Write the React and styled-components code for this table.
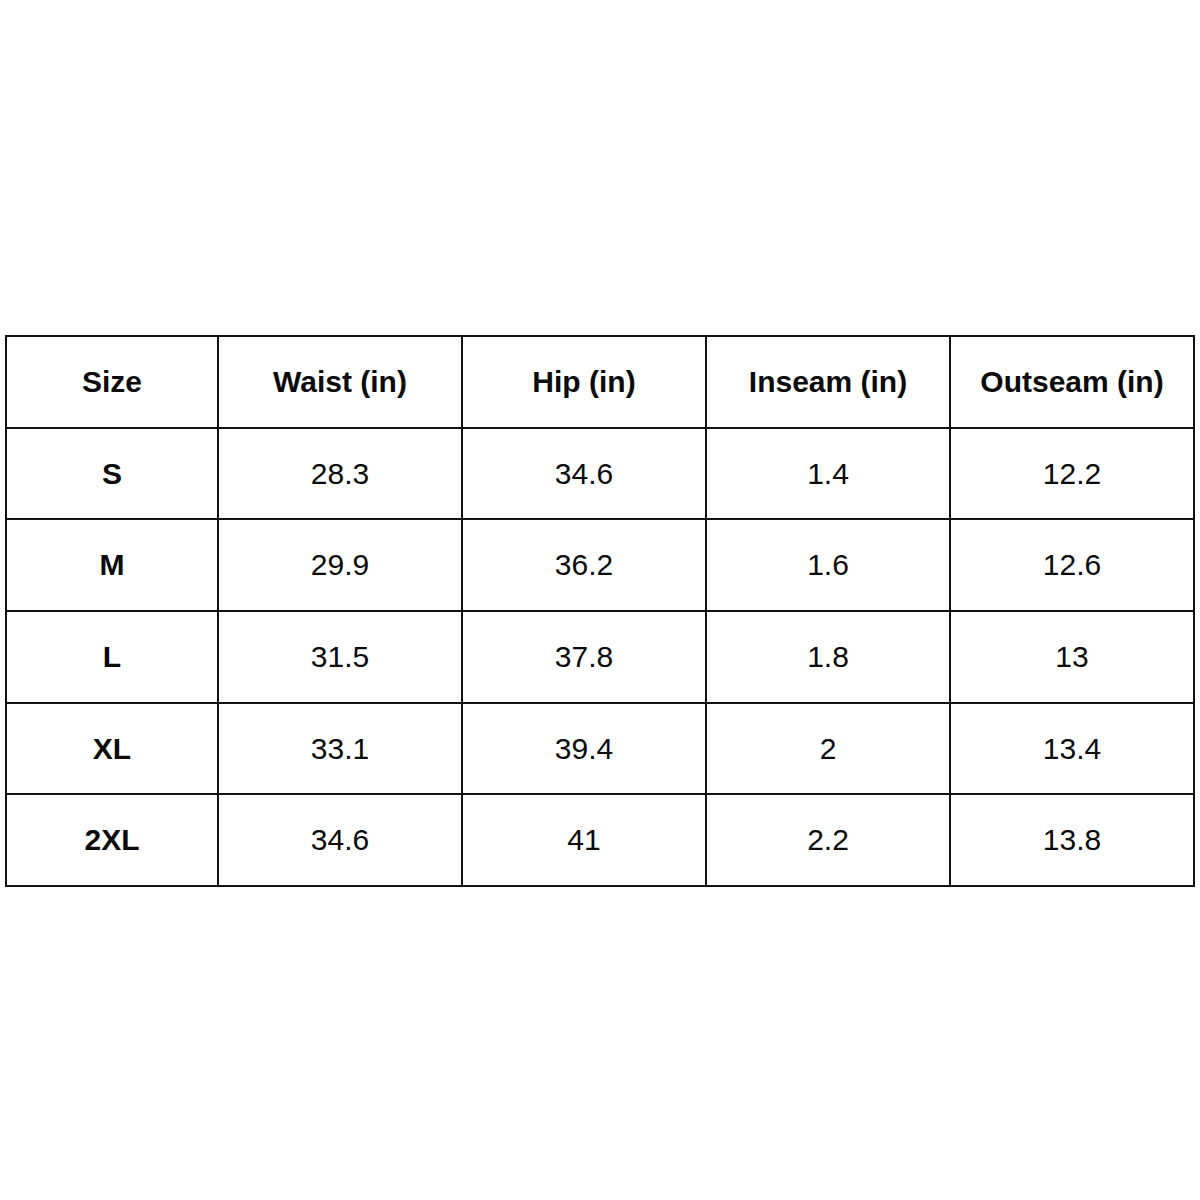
import React from "react";
import styled, { createGlobalStyle } from "styled-components";

const GlobalStyle = createGlobalStyle`
  html, body {
    margin: 0;
    padding: 0;
    background: #ffffff;
  }
  body {
    font-family: "Liberation Sans", Arial, sans-serif;
    color: #0a0a0a;
  }
`;

const Page = styled.div`
  width: 1200px;
  height: 1200px;
  box-sizing: border-box;
  padding: 335px 5px 0 5px;
`;

const Grid = styled.div`
  display: grid;
  grid-template-columns: 210px repeat(4, 242px);
  grid-auto-rows: 89.7px;
  gap: 2px;
  padding: 2px;
  background: #111111;
  width: max-content;
`;

const Cell = styled.div`
  background: #ffffff;
  display: flex;
  align-items: center;
  justify-content: center;
  font-size: 30px;
  font-weight: ${(p) => (p.$bold ? 700 : 400)};
  color: #0a0a0a;
`;

const headers = ["Size", "Waist (in)", "Hip (in)", "Inseam (in)", "Outseam (in)"];

const rows = [
  ["S", "28.3", "34.6", "1.4", "12.2"],
  ["M", "29.9", "36.2", "1.6", "12.6"],
  ["L", "31.5", "37.8", "1.8", "13"],
  ["XL", "33.1", "39.4", "2", "13.4"],
  ["2XL", "34.6", "41", "2.2", "13.8"],
];

const App = () => {
  return (
    <>
      <GlobalStyle />
      <Page>
        <Grid>
          {headers.map((h) => (
            <Cell key={h} $bold>
              {h}
            </Cell>
          ))}
          {rows.map((row) =>
            row.map((value, i) => (
              <Cell key={row[0] + i} $bold={i === 0}>
                {value}
              </Cell>
            ))
          )}
        </Grid>
      </Page>
    </>
  );
};

export default App;
